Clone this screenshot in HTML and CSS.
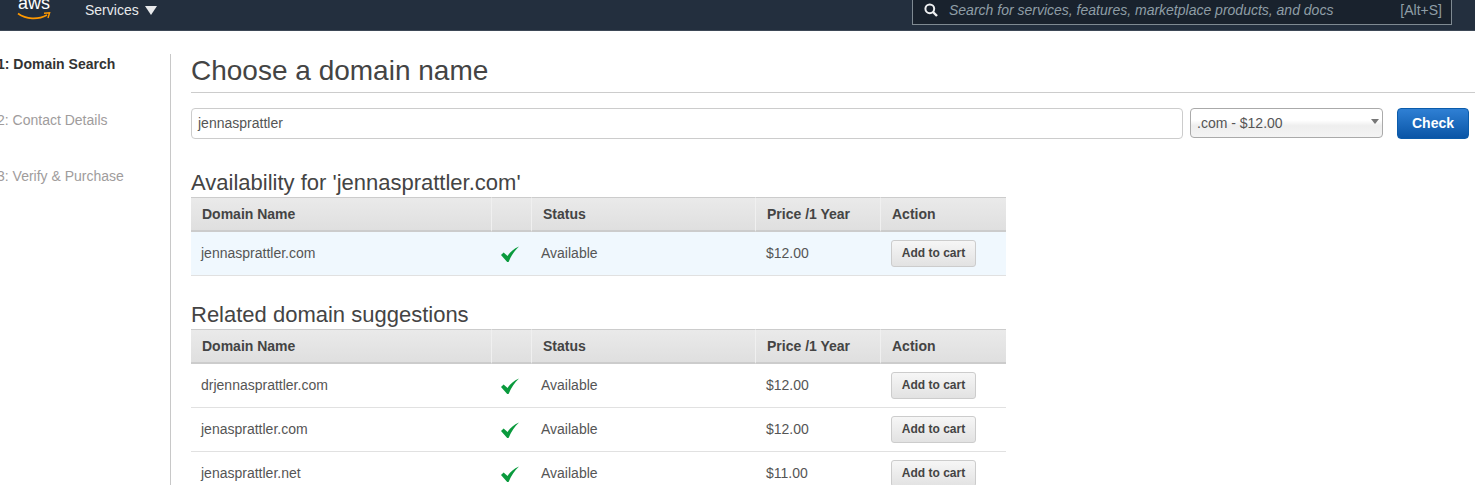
FILE: index.html
```html
<!DOCTYPE html>
<html lang="en">
<head>
<meta charset="utf-8">
<title>Choose a domain name</title>
<link rel="stylesheet" href="styles.css">
</head>
<body>
<header class="nav">
  <div class="logo">
    <span class="logo-text">aws</span>
    <svg class="smile" width="34" height="10" viewBox="0 0 34 10"><path d="M1 1.5C9 7.5 21 8 30 3" fill="none" stroke="#f90" stroke-width="1.6"/><path d="M27 1.2L32.6 0.8L31 6" fill="none" stroke="#f90" stroke-width="1.4"/></svg>
  </div>
  <div class="services">Services<span class="caret"></span></div>
  <div class="search">
    <svg class="search-icon" width="14" height="14" viewBox="0 0 14 14"><circle cx="5.8" cy="5.8" r="4.4" fill="none" stroke="#eef0f1" stroke-width="2"/><path d="M9 9L13 13" stroke="#eef0f1" stroke-width="2.4"/></svg>
    <span class="search-text">Search for services, features, marketplace products, and docs</span>
    <span class="search-key">[Alt+S]</span>
  </div>
</header>
<div class="page">
  <nav class="steps">
    <div class="step active">1: Domain Search</div>
    <div class="step">2: Contact Details</div>
    <div class="step">3: Verify &amp; Purchase</div>
  </nav>
  <main class="main">
    <h1 class="title">Choose a domain name</h1>
    <div class="form">
      <div class="input">jennasprattler</div>
      <div class="select"><span>.com - $12.00</span><span class="select-caret"></span></div>
      <button class="check">Check</button>
    </div>
    <h2 class="heading first">Availability for 'jennasprattler.com'</h2>
    <table class="results">
      <thead><tr><th class="c-name">Domain Name</th><th class="c-icon"></th><th class="c-status">Status</th><th class="c-price">Price /1 Year</th><th class="c-action">Action</th></tr></thead>
      <tbody>
        <tr class="hl"><td>jennasprattler.com</td><td class="tick"><svg width="18" height="16" viewBox="0 0 18 16"><path d="M0 9L2.6 6.6L6.6 10C9 6 12.5 2.8 18 0.4C13.5 4.5 10.2 9.5 7.6 16L6.2 16Z" fill="#0a9a3d"/></svg></td><td class="c-avail">Available</td><td>$12.00</td><td class="c-btn"><button class="add">Add to cart</button></td></tr>
      </tbody>
    </table>
    <h2 class="heading second">Related domain suggestions</h2>
    <table class="results">
      <thead><tr><th class="c-name">Domain Name</th><th class="c-icon"></th><th class="c-status">Status</th><th class="c-price">Price /1 Year</th><th class="c-action">Action</th></tr></thead>
      <tbody>
        <tr><td>drjennasprattler.com</td><td class="tick"><svg width="18" height="16" viewBox="0 0 18 16"><path d="M0 9L2.6 6.6L6.6 10C9 6 12.5 2.8 18 0.4C13.5 4.5 10.2 9.5 7.6 16L6.2 16Z" fill="#0a9a3d"/></svg></td><td class="c-avail">Available</td><td>$12.00</td><td class="c-btn"><button class="add">Add to cart</button></td></tr>
        <tr><td>jenasprattler.com</td><td class="tick"><svg width="18" height="16" viewBox="0 0 18 16"><path d="M0 9L2.6 6.6L6.6 10C9 6 12.5 2.8 18 0.4C13.5 4.5 10.2 9.5 7.6 16L6.2 16Z" fill="#0a9a3d"/></svg></td><td class="c-avail">Available</td><td>$12.00</td><td class="c-btn"><button class="add">Add to cart</button></td></tr>
        <tr><td>jenasprattler.net</td><td class="tick"><svg width="18" height="16" viewBox="0 0 18 16"><path d="M0 9L2.6 6.6L6.6 10C9 6 12.5 2.8 18 0.4C13.5 4.5 10.2 9.5 7.6 16L6.2 16Z" fill="#0a9a3d"/></svg></td><td class="c-avail">Available</td><td>$11.00</td><td class="c-btn"><button class="add">Add to cart</button></td></tr>
      </tbody>
    </table>
  </main>
</div>
</body>
</html>
```
FILE: styles.css
```css
html, body { margin: 0; padding: 0; height: 485px; overflow: hidden; background: #fff; }
body { font-family: "Liberation Sans", Arial, sans-serif; font-size: 14px; color: #444; }
* { box-sizing: border-box; }

.nav { height: 31px; background: #232f3e; border-bottom: 1px solid #3d4856; display: flex; align-items: flex-start; overflow: hidden; color: #e8eaec; }
.logo { width: 85px; padding-left: 17px; height: 30px; overflow: hidden; position: relative; }
.logo-text { display: block; font-size: 18px; line-height: 20px; margin-top: -7px; margin-left: 1px; color: #fff; }
.smile { display: block; margin-top: -1px; }
.services { width: 827px; font-size: 14px; line-height: 20px; display: flex; align-items: center; }
.caret { width: 0; height: 0; margin-left: 6px; border-left: 6px solid transparent; border-right: 6px solid transparent; border-top: 9px solid #e8eaec; }
.search { width: 540px; height: 25px; background: #19222d; border: 1px solid #7f8a92; border-top: 0; display: flex; align-items: center; padding: 0 9px 4px 11px; }
.search-icon { flex: none; margin-right: 11px; }
.search-text { flex: 1; font-style: italic; color: #8f9ea6; font-size: 14px; }
.search-key { color: #8f9ea6; font-size: 14px; }

.page { display: flex; margin-top: 23px; }
.steps { width: 171px; height: 431px; flex: none; border-right: 1px solid #c8c8c8; }
.step { height: 56px; padding-top: 2px; line-height: 16px; margin-left: -3px; color: #a09c9c; font-size: 14px; }
.step.active { color: #333; font-weight: bold; }

.main { margin-left: 20px; width: 1300px; flex: none; }
.title { margin: 0; height: 39px; font-size: 28px; font-weight: normal; line-height: 33px; color: #444; border-bottom: 1px solid #ccc; }
.form { display: flex; margin-top: 15px; height: 31px; align-items: flex-start; }
.input { width: 992px; height: 31px; border: 1px solid #ccc; border-radius: 4px; padding-left: 6px; line-height: 28px; color: #555; }
.select { width: 193px; height: 30px; margin-left: 7px; border: 1px solid #aaa; border-radius: 4px; background: linear-gradient(#fff 40%, #eee 60%, #f4f4f4); padding-left: 6px; line-height: 28px; color: #555; display: flex; justify-content: space-between; }
.select-caret { width: 0; height: 0; margin: 10px 3px 0 0; border-left: 4px solid transparent; border-right: 4px solid transparent; border-top: 5px solid #777; }
.check { width: 72px; height: 31px; margin-left: 14px; border: 1px solid #0b5cab; border-radius: 4px; background: linear-gradient(#2f80d4, #0a55a6); color: #fff; font: bold 14px "Liberation Sans", Arial, sans-serif; padding: 0 0 2px; }

.heading { margin: 0; font-size: 22px; font-weight: normal; line-height: 24px; color: #444; }
.heading.first { margin-top: 32px; height: 26px; }
.heading.second { margin-top: 27px; height: 26px; }

.results { border-collapse: separate; border-spacing: 0; table-layout: fixed; width: 815px; }
.results th { height: 35px; padding: 0 0 1px 11px; text-align: left; font-size: 14px; font-weight: bold; color: #444; background: linear-gradient(#eaeaea, #dfdfdf); border-top: 1px solid #ccc; border-bottom: 2px solid #ccc; border-right: 1px solid #f0f0f0; }
.results th:last-child { border-right: 0; }
.c-name { width: 301px; }
.c-icon { width: 40px; }
.c-status { width: 224px; }
.c-price { width: 125px; }
.c-action { width: 125px; }
.results td { height: 44px; padding: 0 0 2px 10px; font-size: 14px; color: #555; border-bottom: 1px solid #e1e1e1; }
.hl td { background: #f0f8fe; }
.results td.tick { padding: 1px 0 0 9px; line-height: 0; }
.results td.c-avail { padding-left: 9px; }
.results td.c-btn { padding-bottom: 0; }
.add { width: 85px; height: 27px; padding: 0 0 2px; border: 1px solid #ccc; border-radius: 3px; background: linear-gradient(#f6f6f6, #e2e2e2); color: #444; font: bold 12px "Liberation Sans", Arial, sans-serif; }
```
